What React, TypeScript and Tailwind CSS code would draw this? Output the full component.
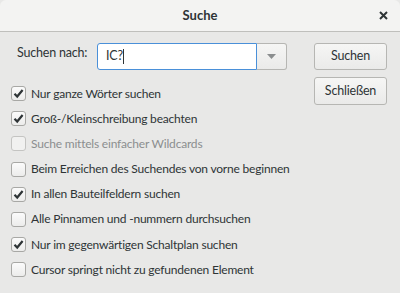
import React from "react";

const items: { label: string; checked: boolean; disabled?: boolean }[] = [
  { label: "Nur ganze Wörter suchen", checked: true },
  { label: "Groß-/Kleinschreibung beachten", checked: true },
  { label: "Suche mittels einfacher Wildcards", checked: false, disabled: true },
  { label: "Beim Erreichen des Suchendes von vorne beginnen", checked: false },
  { label: "In allen Bauteilfeldern suchen", checked: true },
  { label: "Alle Pinnamen und -nummern durchsuchen", checked: false },
  { label: "Nur im gegenwärtigen Schaltplan suchen", checked: true },
  { label: "Cursor springt nicht zu gefundenen Element", checked: false },
];

function Check({ checked, disabled }: { checked: boolean; disabled?: boolean }) {
  return (
    <div
      className={
        "w-[15px] h-[15px] rounded-[3px] border flex items-center justify-center shrink-0 " +
        (disabled
          ? "border-[#c4c4c2] bg-[#f1f1f0]"
          : "border-[#a8a8a5] bg-gradient-to-b from-[#fbfbfb] to-[#ececeb]")
      }
    >
      {checked && (
        <svg width="11" height="11" viewBox="0 0 11 11">
          <path d="M1.5 5.8 L4.2 8.5 L9.6 2" fill="none" stroke="#2e3436" strokeWidth="2.2" />
        </svg>
      )}
    </div>
  );
}

export default function App() {
  return (
    <div
      className="w-[400px] h-[293px] bg-[#e8e8e7] text-[#2e3436] text-[12px] tracking-[-0.2px] flex flex-col overflow-hidden"
      style={{ fontFamily: 'Lato, "Noto Sans", sans-serif' }}
    >
      <div className="h-[32px] shrink-0 bg-[#f3f3f2] border-b border-[#bfbfbc] flex items-center relative rounded-t-[6px]">
        <div className="flex-1 text-center font-bold text-[13px] tracking-normal">Suche</div>
        <div className="absolute right-[11px] top-[10px]">
          <svg width="11" height="11" viewBox="0 0 11 11">
            <path d="M2 2 L9 9 M9 2 L2 9" stroke="#2e3436" strokeWidth="2" />
          </svg>
        </div>
      </div>
      <div className="flex justify-between pl-[11px] pr-[12px] pt-[11px]">
        <div className="w-[290px] flex flex-col">
          <div className="flex items-center h-[27px]">
            <div className="w-[86px] pl-[6px] -mt-[6px] whitespace-nowrap text-[12.5px]">Suchen nach:</div>
            <div className="flex h-[27px]">
              <div className="w-[160px] h-full border border-[#4a90d9] rounded-l-[3px] bg-white flex items-center pl-[8px] text-[12.5px]">
                <span>IC?</span>
                <span className="w-px h-[15px] bg-[#2e3436]" />
              </div>
              <div className="w-[30px] h-full border border-l-0 border-[#b6b6b3] rounded-r-[3px] bg-gradient-to-b from-[#f6f6f5] to-[#eaeae9] flex items-center justify-center">
                <svg width="9" height="5" viewBox="0 0 9 5">
                  <path d="M0 0 L9 0 L4.5 5 Z" fill="#8b8e8f" />
                </svg>
              </div>
            </div>
          </div>
          <div className="flex flex-col mt-[16px] gap-[10.2px]">
            {items.map((it) => (
              <div key={it.label} className="flex items-center gap-[5px] h-[15px] whitespace-nowrap">
                <Check checked={it.checked} disabled={it.disabled} />
                <span className={it.disabled ? "text-[#8b8e8f]" : ""}>{it.label}</span>
              </div>
            ))}
          </div>
        </div>
        <div className="flex flex-col gap-[7px] w-[73px] shrink-0 mr-[1px] text-[12.5px]">
          <button className="h-[27px] border border-[#b6b6b3] rounded-[3px] bg-gradient-to-b from-[#f6f6f5] to-[#eaeae9] whitespace-nowrap">
            Suchen
          </button>
          <button className="h-[28px] border border-[#b6b6b3] rounded-[3px] bg-gradient-to-b from-[#f6f6f5] to-[#eaeae9] whitespace-nowrap">
            Schließen
          </button>
        </div>
      </div>
    </div>
  );
}
